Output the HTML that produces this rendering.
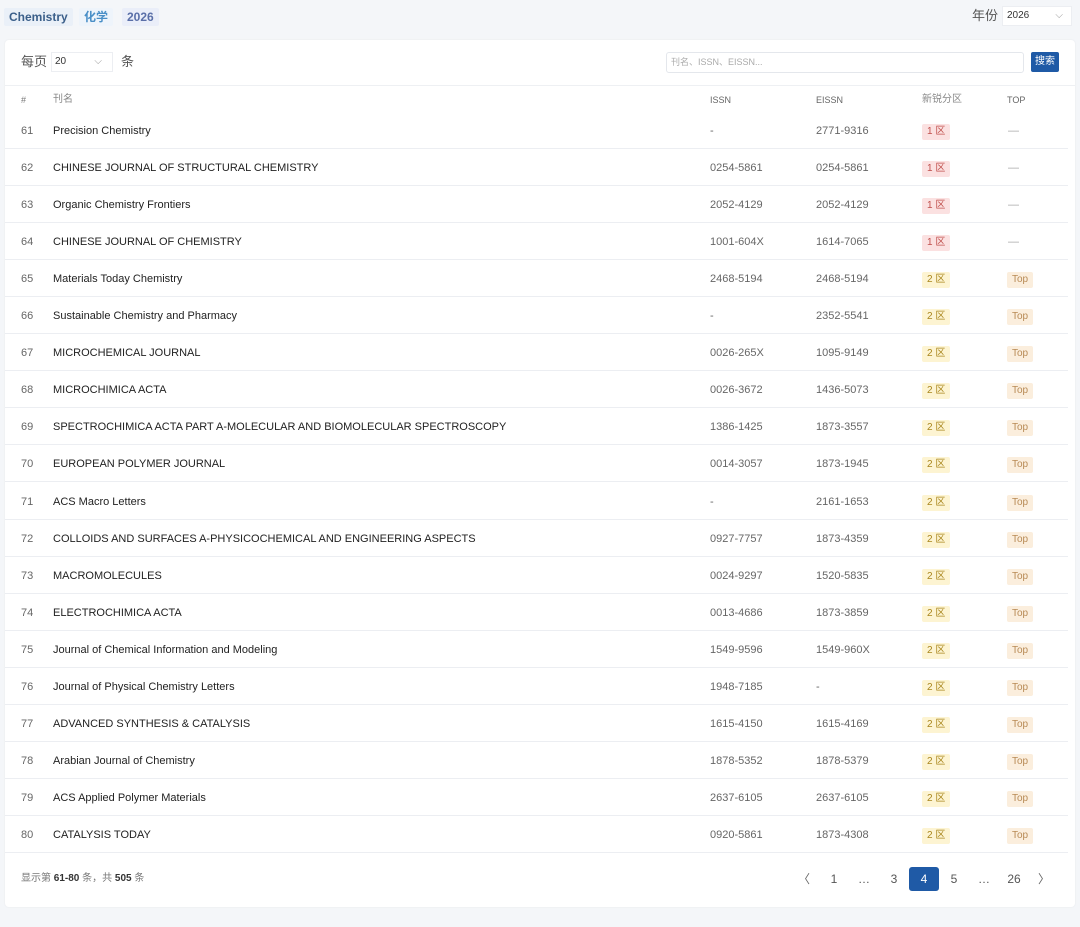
<!DOCTYPE html>
<html><head><meta charset="utf-8"><style>
*{box-sizing:border-box;margin:0;padding:0}
body{width:1080px;height:927px;background:#f4f6f9;font-family:"Liberation Sans","Noto Sans CJK SC",sans-serif;position:relative;overflow:hidden;color:#333}
.tag{position:absolute;top:8px;height:18px;line-height:18px;font-size:12px;font-weight:bold;padding:0 5px;border-radius:2px}
.card{position:absolute;left:5px;top:40px;width:1070px;height:867px;background:#fff;border-radius:4px;box-shadow:0 0 2px rgba(0,0,0,.06)}
.abs{position:absolute;line-height:14px}
.row{position:absolute;left:0;width:1063px;height:37px;border-bottom:1px solid #eceef2;font-size:11px;line-height:39px}
.row span{position:absolute;top:0}
.c0{left:16px;color:#666}.c1{left:48px;color:#222}.c2{left:705px;color:#666}.c3{left:811px;color:#666}
.b{display:inline-block;height:16px;line-height:16px;font-size:10px;padding:0 5px;border-radius:2px;vertical-align:top;margin-top:12px}
.r1{background:#fbe1e1;color:#c0504d}.r2{background:#fdf4d2;color:#a9861c}
.tp{background:#fbeedd;color:#b88a55}
.pg{position:absolute;top:827px;font-size:12px;color:#555;width:30px;height:24px;line-height:24px;text-align:center}
</style></head><body>
<div class="tag" style="left:4px;background:#eaf0f8;color:#3b5f8a">Chemistry</div>
<div class="tag" style="left:79px;background:#eef4fb;color:#4a8fc7">化学</div>
<div class="tag" style="left:122px;background:#eaeef9;color:#5a6fa8">2026</div>
<div class="abs" style="left:972px;top:9px;font-size:13px;color:#555">年份</div>
<div class="abs" style="left:1002px;top:6px;width:70px;height:20px;background:#fff;border:1px solid #eceef2;font-size:10px;line-height:18px;padding-left:4px;color:#333">2026<span style="position:absolute;right:8px;color:#999">⌵</span></div>
<div class="card">
<div class="abs" style="left:16px;top:15px;font-size:13px;color:#555">每页</div>
<div class="abs" style="left:46px;top:12px;width:62px;height:20px;border:1px solid #eceef2;font-size:10px;line-height:18px;padding-left:3px">20<span style="position:absolute;right:10px;color:#999">⌵</span></div>
<div class="abs" style="left:116px;top:15px;font-size:13px;color:#555">条</div>
<div class="abs" style="left:661px;top:12px;width:358px;height:21px;border:1px solid #e4e7ec;border-radius:3px;font-size:9px;color:#aaa;line-height:19px;padding-left:4px">刊名、ISSN、EISSN...</div>
<div class="abs" style="left:1026px;top:12px;width:28px;height:20px;background:#1f5aa6;color:#fff;font-size:10px;line-height:20px;text-align:center;border-radius:2px">搜索</div>
<div class="abs" style="left:0;top:45px;width:1070px;height:1px;background:#eef0f3"></div>
<div class="abs" style="top:53px;left:16px;font-size:9px;color:#777">#</div>
<div class="abs" style="top:53px;left:48px;font-size:10px;color:#888">刊名</div>
<div class="abs" style="top:53px;left:705px;font-size:9px;color:#666">ISSN</div>
<div class="abs" style="top:53px;left:811px;font-size:9px;color:#666">EISSN</div>
<div class="abs" style="top:53px;left:917px;font-size:10px;color:#888">新锐分区</div>
<div class="abs" style="top:53px;left:1002px;font-size:9px;color:#666">TOP</div>
<div id="rows"></div>
<div class="abs" style="left:16px;top:832px;font-size:10px;color:#777">显示第 <b style="color:#333">61-80</b> 条，共 <b style="color:#333">505</b> 条</div>
<div class="pg" style="left:784px;color:#666">〈</div>
<div class="pg" style="left:814px">1</div>
<div class="pg" style="left:844px">…</div>
<div class="pg" style="left:874px">3</div>
<div class="pg" style="left:904px;background:#1f5aa6;color:#fff;border-radius:3px">4</div>
<div class="pg" style="left:934px">5</div>
<div class="pg" style="left:964px">…</div>
<div class="pg" style="left:994px">26</div>
<div class="pg" style="left:1024px;color:#666">〉</div>
</div>
<script>
var d=[["Precision Chemistry","-","2771-9316",1],["CHINESE JOURNAL OF STRUCTURAL CHEMISTRY","0254-5861","0254-5861",1],["Organic Chemistry Frontiers","2052-4129","2052-4129",1],["CHINESE JOURNAL OF CHEMISTRY","1001-604X","1614-7065",1],["Materials Today Chemistry","2468-5194","2468-5194",2],["Sustainable Chemistry and Pharmacy","-","2352-5541",2],["MICROCHEMICAL JOURNAL","0026-265X","1095-9149",2],["MICROCHIMICA ACTA","0026-3672","1436-5073",2],["SPECTROCHIMICA ACTA PART A-MOLECULAR AND BIOMOLECULAR SPECTROSCOPY","1386-1425","1873-3557",2],["EUROPEAN POLYMER JOURNAL","0014-3057","1873-1945",2],["ACS Macro Letters","-","2161-1653",2],["COLLOIDS AND SURFACES A-PHYSICOCHEMICAL AND ENGINEERING ASPECTS","0927-7757","1873-4359",2],["MACROMOLECULES","0024-9297","1520-5835",2],["ELECTROCHIMICA ACTA","0013-4686","1873-3859",2],["Journal of Chemical Information and Modeling","1549-9596","1549-960X",2],["Journal of Physical Chemistry Letters","1948-7185","-",2],["ADVANCED SYNTHESIS & CATALYSIS","1615-4150","1615-4169",2],["Arabian Journal of Chemistry","1878-5352","1878-5379",2],["ACS Applied Polymer Materials","2637-6105","2637-6105",2],["CATALYSIS TODAY","0920-5861","1873-4308",2]];
var h="";d.forEach(function(r,i){h+='<div class="row" style="top:'+(72+i*37.05)+'px"><span class="c0">'+(61+i)+'</span><span class="c1">'+r[0].replace("&","&amp;")+'</span><span class="c2">'+r[1]+'</span><span class="c3">'+r[2]+'</span><span style="left:917px"><i class="b '+(r[3]==1?'r1':'r2')+'" style="font-style:normal">'+r[3]+' 区</i></span><span style="left:1002px">'+(r[3]==1?'<span style="position:static;color:#aaa;padding-left:1px">—</span>':'<i class="b tp" style="font-style:normal">Top</i>')+'</span></div>'});
document.getElementById("rows").innerHTML=h;
</script>
</body></html>
